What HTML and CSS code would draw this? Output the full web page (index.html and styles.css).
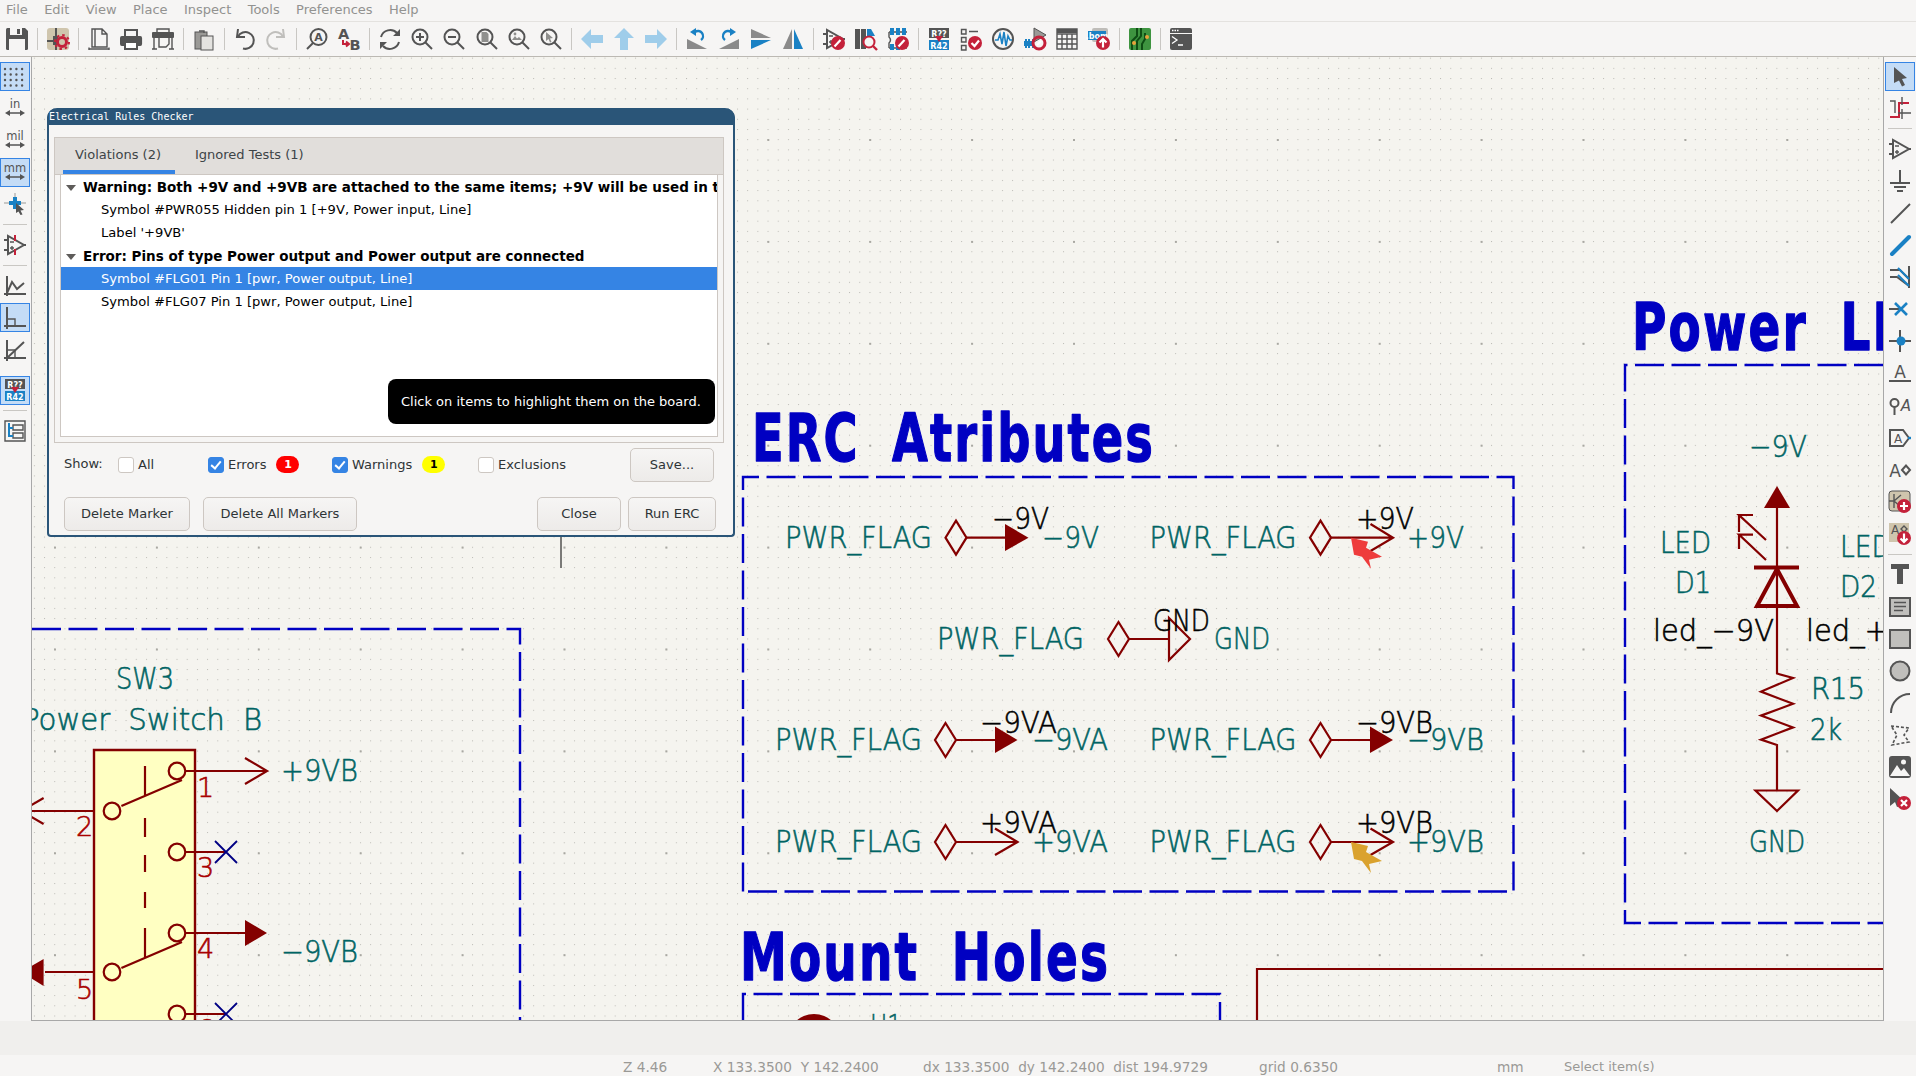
FILE: index.html
```html
<!DOCTYPE html>
<html lang="en">
<head>
    <meta charset="UTF-8">
    <title>Schematic Editor</title>
    <link rel="stylesheet" href="styles.css">
</head>
<body>
    <!-- Shared icon parts -->
    <svg class="defs" width="0" height="0">
        <defs>
            <symbol id="amp" viewBox="0 0 22 22">
                <path class="s" d="M4 2V20L20 11ZM0 6H4M0 16H4M20 11H22"/>
                <path class="s1" d="M6 8H10M6 14H10M8 12V16"/>
            </symbol>
            <symbol id="lens-r" viewBox="0 0 22 22">
                <circle class="s" cx="9" cy="9" r="7.5"/>
                <path class="s" d="M14.5 14.5L21 21"/>
            </symbol>
            <symbol id="badge-pen" viewBox="0 0 22 22">
                <circle class="red" cx="15" cy="15" r="7"/>
                <path class="w2" d="M11.5 18.5L17.5 12"/>
            </symbol>
            <symbol id="badge-check" viewBox="0 0 22 22">
                <circle class="red" cx="15" cy="15" r="7"/>
                <path class="w2" d="M11.5 15L14.5 18L19 12.5"/>
            </symbol>
            <symbol id="badge-plus" viewBox="0 0 22 22">
                <circle class="red" cx="15" cy="15" r="7"/>
                <path class="w2" d="M11 15H19M15 11V19"/>
            </symbol>
            <symbol id="badge-x" viewBox="0 0 22 22">
                <circle class="red" cx="15" cy="15" r="7"/>
                <path class="w2" d="M12 12L18 18M18 12L12 18"/>
            </symbol>
            <symbol id="badge-down" viewBox="0 0 22 22">
                <circle class="red" cx="15" cy="15" r="7"/>
                <path class="w2" d="M15 10.5V19M11.5 15.5L15 19L18.5 15.5"/>
            </symbol>
            <symbol id="badge-up" viewBox="0 0 22 22">
                <circle class="red" cx="15" cy="15" r="7"/>
                <path class="w2" d="M15 19.5V11M11.5 14.5L15 11L18.5 14.5"/>
            </symbol>
            <symbol id="annotate" viewBox="0 0 22 22">
                <rect class="f" x="1" y="0" width="20" height="10"/>
                <text class="ico-text" x="11" y="8.6" text-anchor="middle">R??</text>
                <rect class="blue" x="1" y="12" width="20" height="10"/>
                <text class="ico-text" x="11" y="20.6" text-anchor="middle">R42</text>
                <path class="red" d="M7 8H15L11 14Z"/>
            </symbol>
        </defs>
    </svg>

    <div class="menubar">
        <span>File</span><span>Edit</span><span>View</span><span>Place</span><span>Inspect</span><span>Tools</span><span>Preferences</span><span>Help</span>
    </div>

    <!-- Top toolbar -->
    <div class="toolbar">
        <span class="btn"><svg viewBox="0 0 22 22"><path class="f" d="M0 1.5Q0 0 1.5 0H19L22 3V20.5Q22 22 20.5 22H1.5Q0 22 0 20.5Z"/><rect class="bg" x="4" y="0" width="12" height="7"/><rect class="f" x="11" y="1" width="3" height="5"/><rect class="bg" x="3" y="11" width="16" height="11"/></svg></span>
        <i class="sep"></i>
        <span class="btn"><svg viewBox="0 0 22 22"><rect x="0" y="0" width="22" height="22" rx="3" fill="#cfc5ad"/><path class="s" d="M9 0V8M0 13H7M9 18V22"/><rect class="f" x="6" y="8" width="5" height="9"/><circle cx="15" cy="14" r="4.5" fill="none" stroke="#c4213a" stroke-width="3"/><circle cx="15" cy="14" r="7" fill="none" stroke="#c4213a" stroke-width="2" stroke-dasharray="2.5 3"/></svg></span>
        <i class="sep"></i>
        <span class="btn"><svg viewBox="0 0 22 22"><path class="s1" d="M4 1H14L19 6V19H4ZM7 1V19M14 1V6H19M1 21H21M1 19.5V22M21 19.5V22"/></svg></span>
        <span class="btn"><svg viewBox="0 0 22 22"><rect class="f" x="0" y="8" width="24" height="10" rx="2" transform="scale(.92 1)"/><path class="s" d="M5 8V2H17V8"/><rect x="5" y="14" width="12" height="7" fill="#fff" stroke="#545454" stroke-width="2"/></svg></span>
        <span class="btn"><svg viewBox="0 0 22 22"><rect class="f" x="0" y="4" width="22" height="6" rx="1"/><path class="s1" d="M5 4V1H17V4M2 10V21M20 10V21M0 21H5M17 21H22"/><path class="s1" d="M7 10V19H14L17 16V10"/></svg></span>
        <i class="sep"></i>
        <span class="btn"><svg viewBox="0 0 22 22"><rect x="2" y="4" width="12" height="17" fill="#9a9996" stroke="#545454"/><rect x="8" y="8" width="12" height="14" fill="#e4e3e0" stroke="#545454"/><path class="s1" d="M6 3H11V5"/></svg></span>
        <i class="sep"></i>
        <span class="btn"><svg viewBox="0 0 22 22"><path class="s" d="M5 1L4 9L12 9"/><path class="s" d="M5 8.5A8.4 8.4 0 1 1 10 20.5"/></svg></span>
        <span class="btn"><svg viewBox="0 0 22 22"><path class="s dis" d="M17 1L18 9L10 9"/><path class="s dis" d="M17 8.5A8.4 8.4 0 1 0 12 20.5"/></svg></span>
        <i class="sep"></i>
        <span class="btn"><svg viewBox="0 0 22 22"><circle class="s" cx="12.5" cy="9" r="8"/><path class="s" d="M7 15L1 21"/><text class="ico-dark" x="12.5" y="13" text-anchor="middle">A</text></svg></span>
        <span class="btn"><svg viewBox="0 0 22 22"><text class="ico-bold" x="0" y="11">A</text><text class="ico-bold" x="11.5" y="22">B</text><path d="M5 12V16H10M8 13.5L11 16L8 18.5" fill="none" stroke="#c4213a" stroke-width="2"/></svg></span>
        <i class="sep"></i>
        <span class="btn"><svg viewBox="0 0 22 22"><path class="s" d="M2 9A9.5 9.5 0 0 1 18 5M4 18A9.5 9.5 0 0 0 20 14"/><path class="f" d="M21 1V8H14ZM1 21V14H8Z"/></svg></span>
        <span class="btn"><svg viewBox="0 0 22 22"><use href="#lens-r"/><path class="s" d="M5 9H13M9 5V13"/></svg></span>
        <span class="btn"><svg viewBox="0 0 22 22"><use href="#lens-r"/><path class="s" d="M5 9H13"/></svg></span>
        <span class="btn"><svg viewBox="0 0 22 22"><use href="#lens-r"/><path fill="#8f8f8d" d="M5.5 4H10.5L12.5 6V14H5.5Z"/></svg></span>
        <span class="btn"><svg viewBox="0 0 22 22"><use href="#lens-r"/><path fill="#8f8f8d" d="M4 12L7 8L9 10.5L11 9L14 12Z"/><circle cx="7" cy="6" r="1.4" fill="#8f8f8d"/></svg></span>
        <span class="btn"><svg viewBox="0 0 22 22"><use href="#lens-r"/><path fill="#8f8f8d" d="M6 4L13 10L10 10.5L11.5 14L10 14.5L8.5 11L6 13Z"/></svg></span>
        <i class="sep"></i>
        <span class="btn"><svg viewBox="0 0 22 22"><path class="pale" d="M0 11L10 1V7H22V15H10V21Z"/></svg></span>
        <span class="btn"><svg viewBox="0 0 22 22"><path class="pale" d="M11 0L21 10H15V22H7V10H1Z"/></svg></span>
        <span class="btn"><svg viewBox="0 0 22 22"><path class="pale" d="M22 11L12 1V7H0V15H12V21Z"/></svg></span>
        <i class="sep"></i>
        <span class="btn"><svg viewBox="0 0 22 22"><path fill="#8a8a8a" d="M1 11L21 21H1Z"/><path d="M15 12A5 5 0 0 0 9 4" fill="none" stroke="#1a81c4" stroke-width="2.4"/><path class="blue" d="M10 0V8L4 4Z"/></svg></span>
        <span class="btn"><svg viewBox="0 0 22 22"><path fill="#8a8a8a" d="M21 11V21H1Z"/><path d="M7 12A5 5 0 0 1 13 4" fill="none" stroke="#1a81c4" stroke-width="2.4"/><path class="blue" d="M12 0V8L18 4Z"/></svg></span>
        <span class="btn"><svg viewBox="0 0 22 22"><path fill="#8a8a8a" d="M1 1L21 10H1Z"/><path class="blue" d="M21 12H1V21Z"/></svg></span>
        <span class="btn"><svg viewBox="0 0 22 22"><path fill="#8a8a8a" d="M1 21L10 1V21Z"/><path class="blue" d="M12 1L21 21H12Z"/></svg></span>
        <i class="sep"></i>
        <span class="btn"><svg viewBox="0 0 22 22"><use href="#amp"/><use href="#badge-pen"/></svg></span>
        <span class="btn"><svg viewBox="0 0 22 22"><rect class="f" x="0" y="1" width="5" height="20"/><rect class="f" x="6" y="1" width="5" height="20"/><path class="blue" d="M12 1H16L20 8H12Z"/><circle cx="14" cy="14" r="5.5" fill="#f6f5f4" stroke="#c4213a" stroke-width="2"/><path d="M18 18L22 22" stroke="#c4213a" stroke-width="2.4"/></svg></span>
        <span class="btn"><svg viewBox="0 0 22 22"><path class="s1" d="M2 4H20M2 20H20M2 4V9Q5 12 2 15V20"/><path class="blue" d="M3 0H7V7H3ZM9 0H13V7H9ZM15 0H19V7H15ZM3 16H7V22H3ZM9 16H13V22H9Z"/><use href="#badge-pen"/></svg></span>
        <i class="sep"></i>
        <span class="btn"><svg viewBox="0 0 22 22"><use href="#annotate"/></svg></span>
        <span class="btn"><svg viewBox="0 0 22 22"><path class="s1" d="M1.5 1.5H6V6H1.5ZM1.5 9.5H6V14H1.5ZM1.5 17.5H6V22H1.5ZM9 3.5H18M9 11.5H12"/><use href="#badge-check"/></svg></span>
        <span class="btn"><svg viewBox="0 0 22 22"><circle class="s" cx="11" cy="11" r="10"/><path d="M3 12H6L8 6L10 16L12 4L14 18L16 8L18 12H20" fill="none" stroke="#1a81c4" stroke-width="1.6"/></svg></span>
        <span class="btn"><svg viewBox="0 0 22 22"><path fill="#9a9996" stroke="#545454" d="M10 0L22 7L10 14Z"/><path class="blue" d="M1 11H3V20H1ZM4 11H6V20H4ZM8 11H10V20H8ZM0 13H10V18H0Z"/><circle cx="15" cy="15" r="6" fill="none" stroke="#c4213a" stroke-width="3"/><path class="w2" d="M13 17L17 13"/></svg></span>
        <span class="btn"><svg viewBox="0 0 22 22"><rect class="bg" x="1" y="1" width="20" height="20"/><path class="s1" d="M1 1H21V21H1ZM1 6H21M1 11H21M1 16H21M6 6V21M11 6V21M16 6V21" stroke="#545454"/><rect class="f" x="1" y="1" width="20" height="4"/></svg></span>
        <span class="btn"><svg viewBox="0 0 22 22"><rect x="4" y="0" width="16" height="14" rx="2" fill="#bfbdb9"/><rect class="blue" x="0" y="3" width="18" height="9"/><text class="ico-text" x="9" y="10.5" text-anchor="middle">.bom</text><use href="#badge-up"/></svg></span>
        <i class="sep"></i>
        <span class="btn"><svg viewBox="0 0 22 22"><rect x="0" y="0" width="22" height="22" rx="2" fill="#3e9440"/><path d="M8 0V8L3 13V22M12 0V8L8 13V22M16 5V11L13 16V22" fill="none" stroke="#0e4d14" stroke-width="2"/><circle cx="5" cy="15" r="2" fill="#e8a23a"/><circle cx="18" cy="9" r="2" fill="#e8a23a"/></svg></span>
        <i class="sep"></i>
        <span class="btn"><svg viewBox="0 0 22 22"><rect class="f" x="0" y="0" width="22" height="22" rx="2"/><rect x="0" y="5" width="22" height="1" fill="#f6f5f4"/><path class="w1" d="M2 8.5L7 12L2 15.5M8 17H13"/><path class="w1" d="M2 2.5H3.5M4.5 2.5H6M7 2.5H8.5"/></svg></span>
    </div>

    <div class="workspace">
        <!-- Left toolbar -->
        <div class="side side-left">
            <span class="vbtn on"><svg viewBox="0 0 22 22"><path d="M1 4H23M1 9.5H23M1 15H23M1 20.5H23" fill="none" stroke="#545454" stroke-width="2.4" stroke-linecap="round" stroke-dasharray="0 5.7"/></svg></span>
            <span class="vbtn"><svg viewBox="0 0 22 22"><text class="unit" x="11" y="11" text-anchor="middle">in</text><path class="f" d="M1 16L6 13V15.3H16V13L21 16L16 19V16.7H6V19Z"/></svg></span>
            <span class="vbtn"><svg viewBox="0 0 22 22"><text class="unit" x="11" y="11" text-anchor="middle">mil</text><path class="f" d="M1 16L6 13V15.3H16V13L21 16L16 19V16.7H6V19Z"/></svg></span>
            <span class="vbtn on"><svg viewBox="0 0 22 22"><text class="unit" x="11" y="11" text-anchor="middle">mm</text><path class="f" d="M1 16L6 13V15.3H16V13L21 16L16 19V16.7H6V19Z"/></svg></span>
            <span class="vbtn"><svg viewBox="0 0 22 22"><path d="M11 0V10M0 10H6M16 10H22" stroke="#9a9996" fill="none"/><path class="blue" d="M9 4H13V8H17V12H13V16H9V12H5V8H9Z"/><path class="f" d="M12 10L20 17L16.5 17.5L18.5 21.5L16.5 22L14.5 18.5L12 20Z"/></svg></span>
            <i class="vsep"></i>
            <span class="vbtn"><svg viewBox="0 0 22 22"><use href="#amp"/><path d="M11 1V7M11 15V21" stroke="#c4213a" stroke-width="2"/></svg></span>
            <i class="vsep"></i>
            <span class="vbtn"><svg viewBox="0 0 22 22"><path class="s" d="M3 1V21M0 19H22M3 18L8 7L13 14L20 8"/></svg></span>
            <span class="vbtn on"><svg viewBox="0 0 22 22"><path class="s" d="M3 0V22M0 19H22"/><path class="s1" d="M3 12H11V19"/></svg></span>
            <span class="vbtn"><svg viewBox="0 0 22 22"><path class="s" d="M3 1V22M0 19H22M3 19L20 3"/><path class="s1" d="M3 11H11V19"/></svg></span>
            <i class="vsep blank"></i>
            <span class="vbtn on"><svg viewBox="0 0 22 22"><use href="#annotate"/></svg></span>
            <i class="vsep"></i>
            <span class="vbtn"><svg viewBox="0 0 22 22"><path class="s1" d="M1 1H21V21H1Z"/><path class="s1" d="M9 5H19V10H9ZM9 13H19V18H9Z"/><path d="M5 3V16H9M5 8H9" fill="none" stroke="#1a81c4" stroke-width="2"/></svg></span>
        </div>

        <!-- Schematic canvas -->
        <div class="canvas">
            <svg class="sheet" viewBox="32 57 1851 963" preserveAspectRatio="none">
                <defs>
                    <pattern id="grid-minor" patternUnits="userSpaceOnUse" x="3.3" y="6.7" width="10.19" height="10.19"><rect width="1" height="1" fill="#bbbab4"/></pattern>
                    <pattern id="grid-major" patternUnits="userSpaceOnUse" x="54" y="648.5" width="101.9" height="101.9"><rect width="2" height="2" fill="#a9a8a2"/></pattern>
                    <g id="flag" class="sym"><path d="M10.5 -17L21 0L10.5 17L0 0Z"/></g>
                    <g id="marker"><path d="M0 0L17 4L15 10L31 19L18 22L20 31L11 19L3 17Z"/></g>
                </defs>
                <rect class="sheet-bg" x="32" y="57" width="1851" height="963"/>
                <rect x="32" y="57" width="1851" height="963" fill="url(#grid-minor)"/>
                <rect x="32" y="57" width="1851" height="963" fill="url(#grid-major)"/>

                <!-- Section frames -->
                <path class="dash" d="M32 629H520V1020"/>
                <path class="dash" d="M743 891.5V477H1513.5V891.5H743"/>
                <path class="dash" d="M1883 365H1625V923H1883"/>
                <path class="dash" d="M743 1020V994H1220V1020"/>
                <path class="sym" d="M1257 1020V969H1883"/>
                <text class="t-title" x="752" y="461" textLength="403" lengthAdjust="spacingAndGlyphs">ERC Atributes</text>
                <text class="t-title" x="740" y="980" textLength="370" lengthAdjust="spacingAndGlyphs">Mount Holes</text>
                <text class="t-title" x="1632" y="350" textLength="346" lengthAdjust="spacingAndGlyphs">Power LEDs</text>

                <!-- ERC power flags -->
                <text class="t-field" x="785" y="548" textLength="147" lengthAdjust="spacingAndGlyphs">PWR_FLAG</text>
                <use href="#flag" x="945.5" y="537.7"/>
                <path class="sym" d="M966 537.7H1005"/>
                <path class="solid" d="M1005 524L1028.5 537.7L1005 551Z"/>
                <text class="t-ref" x="992" y="529" textLength="57" lengthAdjust="spacingAndGlyphs">−9V</text>
                <text class="t-field" x="1042" y="548" textLength="57" lengthAdjust="spacingAndGlyphs">−9V</text>

                <text class="t-field" x="1149.5" y="548" textLength="147" lengthAdjust="spacingAndGlyphs">PWR_FLAG</text>
                <use href="#flag" x="1310" y="537.7"/>
                <path class="sym" d="M1331 537.7H1393M1370.5 524L1393 537.7L1370.5 551"/>
                <text class="t-ref" x="1356" y="529" textLength="58" lengthAdjust="spacingAndGlyphs">+9V</text>
                <text class="t-field" x="1407" y="548" textLength="57" lengthAdjust="spacingAndGlyphs">+9V</text>
                <use href="#marker" x="1351" y="537.7" fill="#ee3c3c"/>

                <text class="t-field" x="937" y="649" textLength="147" lengthAdjust="spacingAndGlyphs">PWR_FLAG</text>
                <use href="#flag" x="1108" y="639"/>
                <path class="sym" d="M1129 639H1169M1169 618L1190 639L1169 660Z"/>
                <text class="t-ref" x="1153" y="631" textLength="57" lengthAdjust="spacingAndGlyphs">GND</text>
                <text class="t-field" x="1214" y="649" textLength="56" lengthAdjust="spacingAndGlyphs">GND</text>

                <text class="t-field" x="775" y="749.5" textLength="147" lengthAdjust="spacingAndGlyphs">PWR_FLAG</text>
                <use href="#flag" x="935" y="740"/>
                <path class="sym" d="M956 740H995"/>
                <path class="solid" d="M995 726.5L1017.5 740L995 753Z"/>
                <text class="t-ref" x="980" y="732.5" textLength="77" lengthAdjust="spacingAndGlyphs">−9VA</text>
                <text class="t-field" x="1032" y="749.5" textLength="76" lengthAdjust="spacingAndGlyphs">−9VA</text>

                <text class="t-field" x="1149.5" y="749.5" textLength="147" lengthAdjust="spacingAndGlyphs">PWR_FLAG</text>
                <use href="#flag" x="1310" y="740"/>
                <path class="sym" d="M1331 740H1370"/>
                <path class="solid" d="M1370 726.5L1393 740L1370 753Z"/>
                <text class="t-ref" x="1356" y="732.5" textLength="77" lengthAdjust="spacingAndGlyphs">−9VB</text>
                <text class="t-field" x="1407" y="749.5" textLength="77" lengthAdjust="spacingAndGlyphs">−9VB</text>

                <text class="t-field" x="775" y="851.5" textLength="147" lengthAdjust="spacingAndGlyphs">PWR_FLAG</text>
                <use href="#flag" x="935" y="842"/>
                <path class="sym" d="M956 842H1017.5M995 828.5L1017.5 842L995 855"/>
                <text class="t-ref" x="980" y="833" textLength="77" lengthAdjust="spacingAndGlyphs">+9VA</text>
                <text class="t-field" x="1032" y="851.5" textLength="76" lengthAdjust="spacingAndGlyphs">+9VA</text>

                <text class="t-field" x="1149.5" y="851.5" textLength="147" lengthAdjust="spacingAndGlyphs">PWR_FLAG</text>
                <use href="#flag" x="1310" y="842"/>
                <path class="sym" d="M1331 842H1393M1370.5 828.5L1393 842L1370.5 855"/>
                <text class="t-ref" x="1356" y="833" textLength="77" lengthAdjust="spacingAndGlyphs">+9VB</text>
                <text class="t-field" x="1407" y="851.5" textLength="77" lengthAdjust="spacingAndGlyphs">+9VB</text>
                <use href="#marker" x="1351" y="842" fill="#daa22e"/>

                <!-- SW3 -->
                <text class="t-field" x="116" y="689" textLength="58" lengthAdjust="spacingAndGlyphs">SW3</text>
                <text class="t-field" x="22" y="730" textLength="240" lengthAdjust="spacingAndGlyphs">Power Switch B</text>
                <path class="body" d="M94 1030V750H195V1030"/>
                <path class="sym" d="M185 771H267M245 758L267 771L245 784M94 811H32M43.6 798L21 811L43.6 824M185 852H226M185 933H245M185 1014H226"/>
                <path class="sym" d="M94 972H45"/>
                <path class="solid" d="M245 920L267 933L245 946ZM43.6 959L21 972L43.6 986Z"/>
                <path class="sym" d="M121.4 806L182 780M121.4 968L182 942M145 766V795M145 818V837M145 855V872M145 892V908M145 928V957"/>
                <circle class="sym" cx="177" cy="771" r="8.3"/>
                <circle class="sym" cx="112" cy="811" r="8.3"/>
                <circle class="sym" cx="177" cy="852" r="8.3"/>
                <circle class="sym" cx="177" cy="933" r="8.3"/>
                <circle class="sym" cx="112" cy="972" r="8.3"/>
                <circle class="sym" cx="177" cy="1014" r="8.3"/>
                <path class="nc" d="M215 841L237 863M237 841L215 863M215 1003L237 1025M237 1003L215 1025"/>
                <text class="t-pin" x="197" y="797">1</text>
                <text class="t-pin" x="76" y="836">2</text>
                <text class="t-pin" x="197" y="877">3</text>
                <text class="t-pin" x="197" y="958">4</text>
                <text class="t-pin" x="76" y="999">5</text>
                <text class="t-pin" x="197" y="1039">6</text>
                <text class="t-field" x="281" y="781" textLength="77" lengthAdjust="spacingAndGlyphs">+9VB</text>
                <text class="t-field" x="281" y="962" textLength="77" lengthAdjust="spacingAndGlyphs">−9VB</text>

                <!-- Power LED -->
                <text class="t-field" x="1749" y="457" textLength="58" lengthAdjust="spacingAndGlyphs">−9V</text>
                <path class="solid" d="M1777 486L1790 508H1764Z"/>
                <path class="sym" d="M1777 500V673.5L1793 678L1761 691.6L1793 703.8L1761 715.6L1793 727.4L1761 739.6L1777 745V790.5M1755.5 790.5H1798L1777 811Z"/>
                <path class="sym-heavy" d="M1754 567.5H1799M1777 569L1757 606H1797Z"/>
                <path class="sym" d="M1766 540L1739 515H1753M1739 515V532M1766 560L1739 534.6H1753M1739 534.6V549"/>
                <text class="t-field" x="1660" y="553" textLength="51" lengthAdjust="spacingAndGlyphs">LED</text>
                <text class="t-field" x="1675" y="593" textLength="36" lengthAdjust="spacingAndGlyphs">D1</text>
                <text class="t-ref" x="1653" y="641" textLength="121" lengthAdjust="spacingAndGlyphs">led_−9V</text>
                <text class="t-field" x="1840" y="557" textLength="52" lengthAdjust="spacingAndGlyphs">LED</text>
                <text class="t-field" x="1840" y="597" textLength="37" lengthAdjust="spacingAndGlyphs">D2</text>
                <text class="t-ref" x="1806" y="641" textLength="121" lengthAdjust="spacingAndGlyphs">led_+9V</text>
                <text class="t-field" x="1811" y="699" textLength="54" lengthAdjust="spacingAndGlyphs">R15</text>
                <text class="t-field" x="1810" y="740" textLength="32" lengthAdjust="spacingAndGlyphs">2k</text>
                <text class="t-field" x="1749" y="851.5" textLength="56" lengthAdjust="spacingAndGlyphs">GND</text>

                <!-- Mount holes, only the tops show -->
                <circle class="solid" cx="814" cy="1040.6" r="26.6"/>
                <text class="t-field" x="870" y="1036" textLength="32" lengthAdjust="spacingAndGlyphs">H1</text>

                <path class="cursor-line" d="M561 480V568"/>
            </svg>
        </div>

        <!-- Right toolbar -->
        <div class="side side-right">
            <span class="vbtn on"><svg viewBox="0 0 22 22"><path class="f" d="M5 2L18 13L13 14L16 20L13 21.5L10 15.5L5 18Z"/></svg></span>
            <span class="vbtn"><svg viewBox="0 0 22 22"><path d="M1 20H10V6H20" fill="none" stroke="#c4213a" stroke-width="2"/><path class="s1" d="M1 4H6V16M13 0V8M13 12V22M9 16H22"/></svg></span>
            <i class="vsep"></i>
            <span class="vbtn"><svg viewBox="0 0 22 22"><use href="#amp"/></svg></span>
            <span class="vbtn"><svg viewBox="0 0 22 22"><path class="s" d="M11 0V13M1 13H21M5 17H17M8 21H14"/></svg></span>
            <span class="vbtn"><svg viewBox="0 0 22 22"><path class="s" d="M2 21L21 2"/></svg></span>
            <span class="vbtn"><svg viewBox="0 0 22 22"><path d="M3 20L20 3" fill="none" stroke="#1a81c4" stroke-width="4" stroke-linecap="round"/></svg></span>
            <span class="vbtn"><svg viewBox="0 0 22 22"><path class="s" d="M20 0V22M1 4H11L20 13M1 11H8L20 20"/><path d="M9 2L20 13M9 9L20 20" fill="none" stroke="#1a81c4" stroke-width="2"/></svg></span>
            <span class="vbtn"><svg viewBox="0 0 22 22"><path class="s" d="M0 11H10"/><path d="M6 5L18 17M18 5L6 17" stroke="#1a81c4" stroke-width="2.6"/></svg></span>
            <span class="vbtn"><svg viewBox="0 0 22 22"><path class="s" d="M11 0V22M0 11H22"/><circle class="blue" cx="12" cy="11" r="4.5"/></svg></span>
            <span class="vbtn"><svg viewBox="0 0 22 22"><text class="unit-lg" x="11" y="16" text-anchor="middle">A</text><path class="s" d="M0 19H22"/></svg></span>
            <span class="vbtn"><svg viewBox="0 0 22 22"><circle class="s" cx="5.5" cy="9" r="4"/><path class="s" d="M5.5 13V21"/><text class="unit-it" x="17" y="17" text-anchor="middle">A</text></svg></span>
            <span class="vbtn"><svg viewBox="0 0 22 22"><path class="s" d="M1 3H14L20 11L14 19H1Z"/><text class="unit-sm" x="9" y="16" text-anchor="middle">A</text><path d="M19 11H22" stroke="#1a81c4" stroke-width="2.4"/></svg></span>
            <span class="vbtn"><svg viewBox="0 0 22 22"><text class="unit-lg" x="6" y="18" text-anchor="middle">A</text><path class="s" d="M13 11L17 6.5L21 11L17 15.5Z"/></svg></span>
            <span class="vbtn"><svg viewBox="0 0 22 22"><rect x="0" y="0" width="21" height="20" rx="3" fill="#cfc5ad" stroke="#545454"/><path class="s1" d="M5 3V17M5 10L12 4M5 10L12 16M0 10H5"/><use href="#badge-plus"/></svg></span>
            <span class="vbtn"><svg viewBox="0 0 22 22"><rect x="0" y="0" width="20" height="19" fill="#cfc5ad"/><text class="unit-sm" x="6" y="11" text-anchor="middle">A</text><path class="s1" d="M12 6L15 3L18 6L15 9Z"/><use href="#badge-down"/></svg></span>
            <i class="vsep"></i>
            <span class="vbtn"><svg viewBox="0 0 22 22"><path class="f" d="M2 1H20V6H14V21H8V6H2Z"/></svg></span>
            <span class="vbtn"><svg viewBox="0 0 22 22"><rect x="1" y="2" width="20" height="18" fill="#c0bfbc" stroke="#545454" stroke-width="2"/><path class="s1" d="M5 6.5H17M5 10.5H17M5 14.5H14"/></svg></span>
            <span class="vbtn"><svg viewBox="0 0 22 22"><rect x="1" y="2" width="20" height="18" fill="#c0bfbc" stroke="#545454" stroke-width="2"/></svg></span>
            <span class="vbtn"><svg viewBox="0 0 22 22"><circle cx="11" cy="11" r="9.5" fill="#c0bfbc" stroke="#545454" stroke-width="2"/></svg></span>
            <span class="vbtn"><svg viewBox="0 0 22 22"><path class="s" d="M2 21A19 19 0 0 1 21 2"/></svg></span>
            <span class="vbtn"><svg viewBox="0 0 22 22"><path d="M2 2L20 4L15 11L20 18L3 21L8 11Z" fill="none" stroke="#545454" stroke-width="1.6" stroke-dasharray="3 2"/></svg></span>
            <span class="vbtn"><svg viewBox="0 0 22 22"><rect class="f" x="0" y="0" width="22" height="22" rx="3"/><path class="bg" d="M1 20L8 9L12 15L15 12L21 20Z"/><circle class="bg" cx="14.5" cy="6" r="2.5"/></svg></span>
            <span class="vbtn"><svg viewBox="0 0 22 22"><path class="f" d="M1 0L14 12L9 13L11 18L8 19L6 14L1 18Z"/><use href="#badge-x"/></svg></span>
        </div>
    </div>

    <div class="msg-panel"></div>
    <div class="statusbar">
        <span class="st-zoom">Z 4.46</span>
        <span class="st-pos">X 133.3500&nbsp; Y 142.2400</span>
        <span class="st-delta">dx 133.3500&nbsp; dy 142.2400&nbsp; dist 194.9729</span>
        <span class="st-grid">grid 0.6350</span>
        <span class="st-unit">mm</span>
        <span class="st-hint">Select item(s)</span>
    </div>

    <!-- Electrical Rules Checker dialog -->
    <div class="dialog">
        <div class="dialog-title">Electrical Rules Checker</div>
        <div class="notebook">
            <div class="tabs">
                <span class="tab active">Violations (2)</span>
                <span class="tab">Ignored Tests (1)</span>
            </div>
            <div class="tree">
                <div class="row parent"><i class="arrow"></i>Warning: Both +9V and +9VB are attached to the same items; +9V will be used in the netlist</div>
                <div class="row child">Symbol #PWR055 Hidden pin 1 [+9V, Power input, Line]</div>
                <div class="row child">Label '+9VB'</div>
                <div class="row parent"><i class="arrow"></i>Error: Pins of type Power output and Power output are connected</div>
                <div class="row child selected">Symbol #FLG01 Pin 1 [pwr, Power output, Line]</div>
                <div class="row child">Symbol #FLG07 Pin 1 [pwr, Power output, Line]</div>
                <div class="tooltip">Click on items to highlight them on the board.</div>
            </div>
        </div>
        <div class="filters">
            <span>Show:</span>
            <label class="check"><i class="box"></i>All</label>
            <label class="check"><i class="box checked"></i>Errors<b class="badge badge-error">1</b></label>
            <label class="check"><i class="box checked"></i>Warnings<b class="badge badge-warning">1</b></label>
            <label class="check"><i class="box"></i>Exclusions</label>
            <button class="save-btn">Save...</button>
        </div>
        <div class="actions">
            <button class="marker-btn">Delete Marker</button>
            <button class="markers-btn">Delete All Markers</button>
            <button class="close-btn">Close</button>
            <button class="run-btn">Run ERC</button>
        </div>
    </div>
</body>
</html>
```

FILE: styles.css
```css
/* General */
html, body {
    margin: 0;
    padding: 0;
}
body {
    width: 1916px;
    height: 1076px;
    overflow: hidden;
    position: relative;
    display: flex;
    flex-direction: column;
    background-color: #f6f5f4;
    font-family: "DejaVu Sans", sans-serif;
    font-size: 13px;
    color: #2e3436;
}
.defs {
    position: absolute;
}

/* Menu and top toolbar */
.menubar {
    height: 19px;
    padding-left: 6px;
    padding-bottom: 2px;
    display: flex;
    gap: 16.4px;
    align-items: center;
    font-size: 13px;
    line-height: 18px;
    color: #929290;
    border-bottom: 1px solid #e4e2df;
}
.toolbar {
    height: 34px;
    padding-left: 1px;
    display: flex;
    align-items: center;
    border-bottom: 1px solid #bcb9b3;
}
.btn {
    width: 32.1px;
    height: 22px;
    flex: none;
    display: flex;
    justify-content: center;
}
.btn svg, .vbtn svg {
    width: 22px;
    height: 22px;
    display: block;
    overflow: visible;
}
.sep {
    width: 1px;
    height: 22px;
    margin: 0 3.87px;
    flex: none;
    background-color: #c9c7c3;
}

/* Side toolbars */
.workspace {
    height: 964px;
    display: flex;
}
.side {
    flex: none;
    display: flex;
    flex-direction: column;
}
.side-left {
    width: 31px;
    padding-top: 3px;
    padding-right: 1px;
    box-sizing: border-box;
}
.side-right {
    width: 32px;
    padding: 3px 1px 0 1px;
    box-sizing: border-box;
}
.vbtn {
    height: 29px;
    margin: 1.55px 0;
    flex: none;
    display: flex;
    align-items: center;
    justify-content: center;
    border: 1px solid transparent;
    box-sizing: border-box;
}
.vbtn.on {
    background-color: #c4dcf6;
    border-color: #3584e4;
}
.vsep {
    height: 1px;
    margin: 3.75px 3px;
    flex: none;
    background-color: #c9c7c3;
}
.vsep.blank {
    background-color: transparent;
}

/* Icon paint */
.s { fill: none; stroke: #545454; stroke-width: 2; }
.s1 { fill: none; stroke: #545454; stroke-width: 1.4; }
.s.dis { stroke: #c0bfbc; }
.f { fill: #545454; }
.bg { fill: #f6f5f4; }
.red { fill: #c4213a; }
.blue { fill: #1a81c4; }
.pale { fill: #9fcdea; }
.w2 { fill: none; stroke: #fff; stroke-width: 2.2; }
.w1 { fill: none; stroke: #fff; stroke-width: 1.3; }
.ico-text { font-size: 8px; font-weight: bold; fill: #fff; }
.ico-dark { font-size: 11px; font-weight: bold; fill: #545454; }
.ico-bold { font-size: 14.5px; font-weight: bold; fill: #545454; }
.unit { font-size: 11.5px; fill: #545454; }
.unit-lg { font-size: 17px; fill: #545454; }
.unit-sm { font-size: 12px; fill: #545454; }
.unit-it { font-size: 15px; font-style: italic; fill: #545454; }

/* Schematic */
.canvas {
    flex: 1;
    min-width: 0;
    border-left: 1px solid #a8a8a8;
    border-right: 1px solid #a8a8a8;
    border-bottom: 1px solid #a8a8a8;
}
.sheet {
    width: 100%;
    height: 100%;
    display: block;
}
.sheet-bg { fill: #f5f4ef; }
.dash {
    fill: none;
    stroke: #0000c2;
    stroke-width: 2.4;
    stroke-dasharray: 29 7.5;
}
.sym, .sym path {
    fill: none;
    stroke: #840000;
    stroke-width: 2.2;
}
.sym-heavy {
    fill: none;
    stroke: #840000;
    stroke-width: 4;
}
.solid { fill: #840000; }
.body {
    fill: #ffffc2;
    stroke: #840000;
    stroke-width: 2.4;
}
.nc {
    fill: none;
    stroke: #000084;
    stroke-width: 1.8;
}
.cursor-line {
    stroke: #000;
    stroke-width: 1;
}
.t-title {
    font-size: 66px;
    font-weight: bold;
    word-spacing: 20px;
    letter-spacing: 3px;
    fill: #0000c2;
    stroke: #0000c2;
    stroke-width: 1.4;
    stroke-linejoin: round;
}
.t-field, .t-ref {
    font-size: 30px;
    font-weight: 200;
    word-spacing: 9px;
    fill: #006464;
    stroke: #006464;
    stroke-width: 0.6;
}
.t-ref {
    fill: #000;
    stroke: #000;
}
.t-pin {
    font-size: 27px;
    font-weight: 200;
    fill: #a90000;
    stroke: #a90000;
    stroke-width: 0.6;
}

/* Bottom panels */
.msg-panel {
    height: 34px;
    background-color: #f0efed;
}
.statusbar {
    height: 19px;
    padding-left: 623px;
    padding-top: 2px;
    display: flex;
    align-items: center;
    color: #9a9996;
    font-size: 13.7px;
    white-space: nowrap;
}
.st-zoom { width: 90px; }
.st-pos { width: 210px; }
.st-delta { width: 336px; }
.st-grid { width: 238px; }
.st-unit { width: 67px; }
.st-hint { font-size: 13px; }

/* Dialog */
.dialog {
    position: absolute;
    left: 47px;
    top: 108px;
    width: 688px;
    height: 429px;
    box-sizing: border-box;
    display: flex;
    flex-direction: column;
    background-color: #f6f5f4;
    border: 2px solid #2a5578;
    border-top: none;
    border-radius: 10px 10px 4px 4px;
}
.dialog-title {
    height: 17px;
    margin: 0 -2px;
    padding-left: 2px;
    flex: none;
    background-color: #2a5578;
    border-radius: 10px 10px 0 0;
    font-family: "DejaVu Sans Mono", monospace;
    font-size: 10px;
    line-height: 17px;
    color: #fff;
}
.notebook {
    height: 306px;
    margin: 12px 9px 0 5px;
    flex: none;
    box-sizing: border-box;
    display: flex;
    flex-direction: column;
    border: 1px solid #cdc7c2;
}
.tabs {
    height: 36px;
    padding-left: 8px;
    flex: none;
    display: flex;
    gap: 8px;
    background-color: #e1dedb;
    border-bottom: 1px solid #cdc7c2;
}
.tab {
    padding: 0 12px;
    line-height: 33px;
    color: #3d4447;
    border-bottom: 4px solid transparent;
    box-sizing: border-box;
}
.tab.active {
    padding-right: 14px;
    border-bottom-color: #3584e4;
}
.tree {
    flex: 1;
    margin: 0 5px 5px;
    position: relative;
    background-color: #fff;
    border: 1px solid #cdc7c2;
    border-top: none;
    overflow: hidden;
}
.row {
    height: 23px;
    line-height: 24px;
    color: #000;
    white-space: nowrap;
    overflow: hidden;
    font-size: 13.1px;
}
.row.parent {
    padding-left: 5px;
    padding-right: 7px;
    font-size: 13.5px;
    font-weight: bold;
}
.row.child {
    padding-left: 40px;
}
.row.selected {
    background-color: #3584e4;
    color: #fff;
}
.arrow {
    display: inline-block;
    margin-right: 7px;
    vertical-align: 1px;
    border-left: 5px solid transparent;
    border-right: 5px solid transparent;
    border-top: 6px solid #5e5c5a;
}
.tooltip {
    position: absolute;
    right: 2px;
    bottom: 12px;
    width: 327px;
    height: 45px;
    box-sizing: border-box;
    padding-left: 13px;
    background-color: #000;
    border-radius: 8px;
    color: #fff;
    line-height: 45px;
}
.filters {
    height: 34px;
    margin-top: 5px;
    padding: 0 19px 0 15px;
    flex: none;
    display: grid;
    grid-template-columns: 54px 90px 124px 146px 1fr auto;
    align-items: center;
    line-height: 14px;
}
.filters > span {
    padding-bottom: 2px;
}
.check {
    display: flex;
    align-items: center;
    margin-bottom: 1px;
}
.box {
    width: 16px;
    height: 16px;
    margin-right: 4px;
    box-sizing: border-box;
    background-color: #fff;
    border: 1px solid #cdc7c2;
    border-radius: 3px;
    position: relative;
}
.box.checked {
    background-color: #3584e4;
    border-color: #3584e4;
}
.box.checked::after {
    content: "";
    position: absolute;
    left: 4px;
    top: 1px;
    width: 4px;
    height: 8px;
    border: solid #fff;
    border-width: 0 2px 2px 0;
    transform: rotate(40deg);
}
.badge {
    width: 23px;
    height: 17px;
    margin-left: 10px;
    border-radius: 9px;
    text-align: center;
    line-height: 17px;
    font-size: 11px;
}
.badge-error { background-color: #ff0000; color: #fff; }
.badge-warning { background-color: #ffff00; color: #000; }
button {
    height: 34px;
    padding: 0 0 2px;
    font-family: "DejaVu Sans", sans-serif;
    font-size: 13px;
    color: #2e3436;
    background: linear-gradient(#f6f5f4, #edebe9);
    border: 1px solid #cdc7c2;
    border-radius: 5px;
}
.save-btn { width: 84px; }
.actions {
    height: 34px;
    margin-top: 15px;
    padding: 0 17px 0 15px;
    flex: none;
    display: flex;
}
.marker-btn { width: 126px; margin-right: 13px; }
.markers-btn { width: 154px; }
.close-btn { width: 84px; margin-left: auto; margin-right: 7px; }
.run-btn { width: 88px; }
```
